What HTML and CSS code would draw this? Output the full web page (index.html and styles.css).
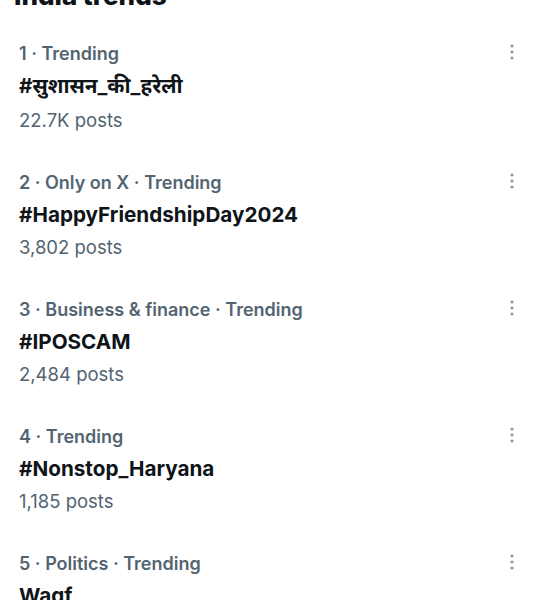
FILE: index.html
```html
<!DOCTYPE html>
<html>
<head>
  <meta charset="utf-8">
  <title>India trends</title>
  <link rel="stylesheet" href="styles.css">
</head>
<body>
  <h2 class="heading">India trends</h2>

  <div class="trends">
    <div class="trend">
      <div class="meta-row">
        <span class="meta">1 · Trending</span>
        <span class="more"><svg viewBox="0 0 18 18" width="18" height="18"><circle cx="9" cy="3" r="1.6"/><circle cx="9" cy="9" r="1.6"/><circle cx="9" cy="15" r="1.6"/></svg></span>
      </div>
      <div class="name">#सुशासन_की_हरेली</div>
      <div class="count">22.7K posts</div>
    </div>

    <div class="trend">
      <div class="meta-row">
        <span class="meta">2 · Only on X · Trending</span>
        <span class="more"><svg viewBox="0 0 18 18" width="18" height="18"><circle cx="9" cy="3" r="1.6"/><circle cx="9" cy="9" r="1.6"/><circle cx="9" cy="15" r="1.6"/></svg></span>
      </div>
      <div class="name">#HappyFriendshipDay2024</div>
      <div class="count">3,802 posts</div>
    </div>

    <div class="trend">
      <div class="meta-row">
        <span class="meta">3 · Business &amp; finance · Trending</span>
        <span class="more"><svg viewBox="0 0 18 18" width="18" height="18"><circle cx="9" cy="3" r="1.6"/><circle cx="9" cy="9" r="1.6"/><circle cx="9" cy="15" r="1.6"/></svg></span>
      </div>
      <div class="name">#IPOSCAM</div>
      <div class="count">2,484 posts</div>
    </div>

    <div class="trend">
      <div class="meta-row">
        <span class="meta">4 · Trending</span>
        <span class="more"><svg viewBox="0 0 18 18" width="18" height="18"><circle cx="9" cy="3" r="1.6"/><circle cx="9" cy="9" r="1.6"/><circle cx="9" cy="15" r="1.6"/></svg></span>
      </div>
      <div class="name">#Nonstop_Haryana</div>
      <div class="count">1,185 posts</div>
    </div>

    <div class="trend">
      <div class="meta-row">
        <span class="meta">5 · Politics · Trending</span>
        <span class="more"><svg viewBox="0 0 18 18" width="18" height="18"><circle cx="9" cy="3" r="1.6"/><circle cx="9" cy="9" r="1.6"/><circle cx="9" cy="15" r="1.6"/></svg></span>
      </div>
      <div class="name">Waqf</div>
    </div>
  </div>
</body>
</html>
```

FILE: styles.css
```css
body {
  margin: 0;
  background: #fff;
  font-family: Inter, "Noto Sans", "Noto Sans Devanagari", sans-serif;
  color: #0f1419;
  overflow: hidden;
}

/* heading is mostly scrolled off the top */
.heading {
  margin: -20px 0 0 0;
  padding: 0 14px;
  font-size: 26px;
  line-height: 32px;
  font-weight: 800;
}

.trends {
  padding-top: 13px;
}

.trend {
  padding: 12px 17px 18px 19px;
  height: 97px;
}

/* first row sits a little looser */
.trend:first-child {
  padding-bottom: 20px;
}

.trend:first-child .count {
  margin-top: 2px;
}

.meta-row {
  display: flex;
  justify-content: space-between;
  align-items: center;
  height: 33px;
}

.meta {
  font-size: 18px;
  font-weight: 600;
  color: #536471;
}

.more {
  display: flex;
  margin-top: -4px;
}

.more svg {
  fill: #8b98a5;
}

.name {
  font-size: 20.7px;
  font-weight: 700;
  line-height: 32px;
}

.count {
  font-size: 18.5px;
  line-height: 32px;
  color: #536471;
}
```
